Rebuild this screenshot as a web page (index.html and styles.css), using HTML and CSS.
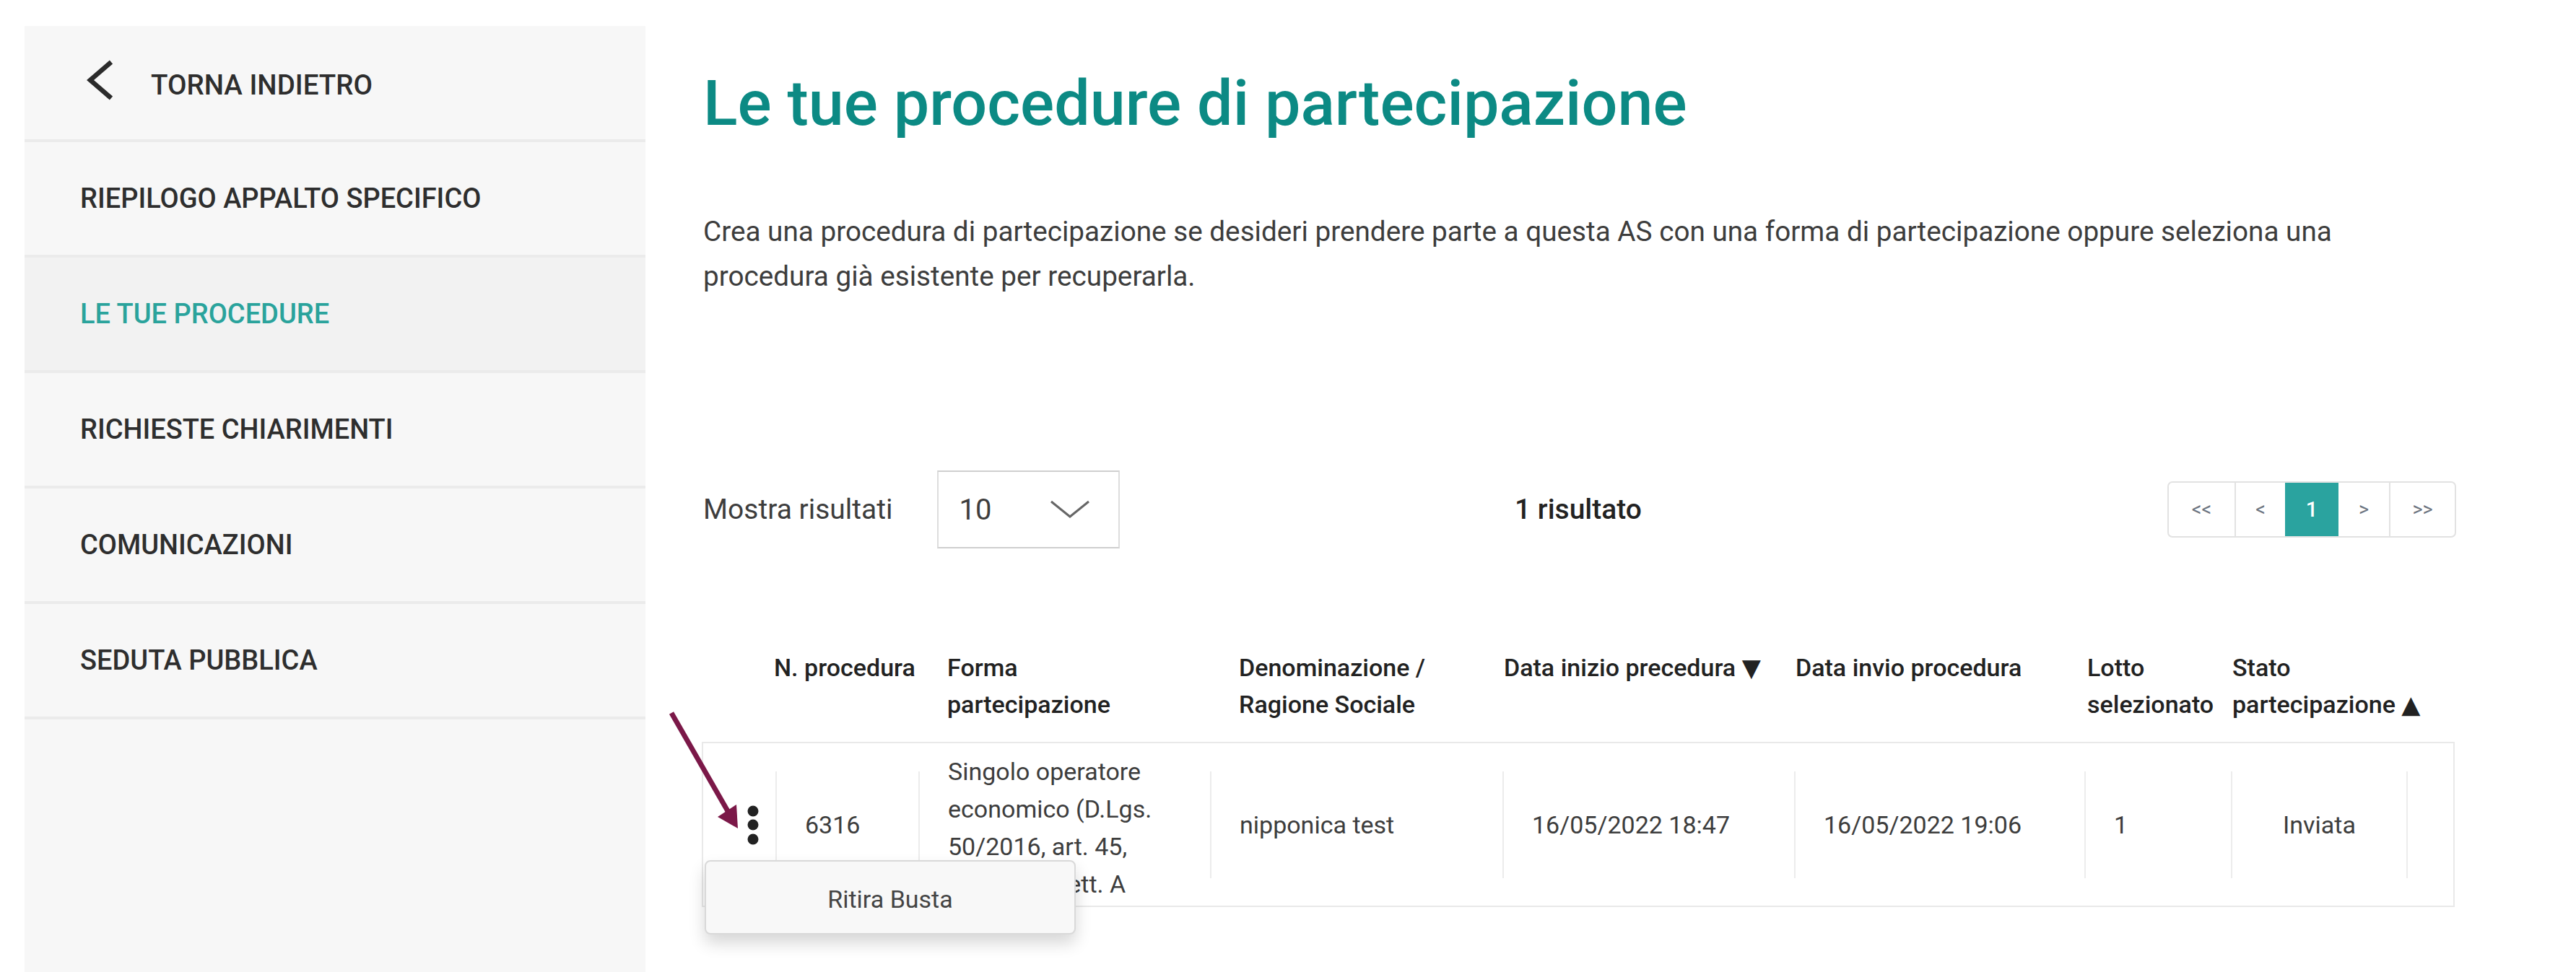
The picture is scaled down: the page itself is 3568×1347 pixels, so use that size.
FILE: index.html
```html
<!DOCTYPE html>
<html lang="it">
<head>
<meta charset="utf-8">
<title>Le tue procedure di partecipazione</title>
<link rel="stylesheet" href="styles.css">
</head>
<body>
<div class="page">
  <aside class="sidebar">
    <a class="nav-item nav-back" href="#">
      <svg class="chev" width="40" height="56" viewBox="0 0 40 56"><polyline points="36,3 7,28 36,53" fill="none" stroke="#2b2b2b" stroke-width="6.5"/></svg>
      <span>TORNA INDIETRO</span>
    </a>
    <a class="nav-item" href="#">RIEPILOGO APPALTO SPECIFICO</a>
    <a class="nav-item active" href="#">LE TUE PROCEDURE</a>
    <a class="nav-item" href="#">RICHIESTE CHIARIMENTI</a>
    <a class="nav-item" href="#">COMUNICAZIONI</a>
    <a class="nav-item" href="#">SEDUTA PUBBLICA</a>
  </aside>

  <main class="main">
    <h1 class="title">Le tue procedure di partecipazione</h1>
    <p class="intro">Crea una procedura di partecipazione se desideri prendere parte a questa AS con una forma di partecipazione oppure seleziona una<br>procedura già esistente per recuperarla.</p>

    <div class="controls">
      <div class="show">
        <span class="show-label">Mostra risultati</span>
        <div class="select">
          <span class="select-value">10</span>
          <svg width="56" height="26" viewBox="0 0 56 26"><polyline points="2,2 28,23 54,2" fill="none" stroke="#666" stroke-width="3"/></svg>
        </div>
      </div>
      <div class="count">1 risultato</div>
      <nav class="pager">
        <span class="pg pg-wide">&lt;&lt;</span>
        <span class="pg">&lt;</span>
        <span class="pg pg-active">1</span>
        <span class="pg">&gt;</span>
        <span class="pg pg-wide">&gt;&gt;</span>
      </nav>
    </div>

    <div class="table">
      <div class="thead">
        <div class="th"></div>
        <div class="th th-tight">N. procedura</div>
        <div class="th th-pad">Forma<br>partecipazione</div>
        <div class="th th-pad">Denominazione /<br>Ragione Sociale</div>
        <div class="th">Data inizio precedura ▼</div>
        <div class="th">Data invio procedura</div>
        <div class="th th-lotto">Lotto<br>selezionato</div>
        <div class="th">Stato<br>partecipazione ▲</div>
        <div class="th"></div>
      </div>

      <div class="row">
        <div class="cell cell-menu">
          <svg width="16" height="56" viewBox="0 0 16 56"><circle cx="8" cy="8" r="7.5" fill="#222"/><circle cx="8" cy="27" r="7.5" fill="#222"/><circle cx="8" cy="47" r="7.5" fill="#222"/></svg>
        </div>
        <div class="cell cell-div">6316</div>
        <div class="cell cell-div cell-multi">Singolo operatore<br>economico (D.Lgs.<br>50/2016, art. 45,<br>comma 2, lett. A</div>
        <div class="cell cell-div">nipponica test</div>
        <div class="cell cell-div">16/05/2022 18:47</div>
        <div class="cell cell-div">16/05/2022 19:06</div>
        <div class="cell cell-div">1</div>
        <div class="cell cell-div cell-center">Inviata</div>
        <div class="cell cell-div"></div>

        <div class="popup">Ritira Busta</div>

        <svg class="arrow" width="110" height="172" viewBox="0 0 110 172">
          <line x1="5" y1="5" x2="83" y2="141" stroke="#7b1848" stroke-width="7"/>
          <polygon points="69,149 95,132 97,165" fill="#7b1848"/>
        </svg>
      </div>
    </div>
  </main>
</div>
</body>
</html>
```

FILE: styles.css
```css
* { box-sizing: border-box; }

html, body {
  margin: 0;
  padding: 0;
  background: #ffffff;
}

body {
  font-family: "Roboto", "DejaVu Sans", "Open Sans", sans-serif;
  color: #333333;
  overflow: hidden;
}

.page {
  display: flex;
  align-items: flex-start;
  min-height: 1347px;
}

/* ---------- sidebar ---------- */
.sidebar {
  width: 860px;
  margin: 36px 0 0 34px;
  min-height: 1311px;
  background: #f7f7f7;
  display: flex;
  flex-direction: column;
}

.nav-item {
  display: flex;
  align-items: center;
  height: 160px;
  padding-left: 77px;
  border-bottom: 4px solid #ebebeb;
  font-size: 38px;
  font-weight: 500;
  color: #2e2e2e;
  text-decoration: none;
}

.nav-back {
  height: 161px;
  padding-left: 84px;
  gap: 51px;
}

.nav-back .chev {
  display: block;
  margin-top: -8px;
}

.nav-back span {
  margin-top: 5px;
  font-size: 38.5px;
}

.nav-item.active {
  background: #f2f2f2;
  color: #2aa39c;
}

/* ---------- main ---------- */
.main {
  width: 2428px;
  margin-left: 78px;
  padding-top: 89px;
}

.title {
  margin: 0 0 0 2px;
  font-size: 88px;
  line-height: 107px;
  font-weight: 500;
  color: #0c8a84;
}

.intro {
  margin: 94px 0 0 2px;
  font-size: 38.7px;
  line-height: 62px;
  color: #3d3d3d;
  white-space: nowrap;
}

/* ---------- controls ---------- */
.controls {
  margin-top: 238px;
  height: 108px;
  display: grid;
  grid-template-columns: 1fr auto 1fr;
  align-items: center;
}

.show {
  display: flex;
  align-items: center;
  gap: 61px;
  padding-left: 2px;
}

.show-label {
  font-size: 39px;
  color: #3d3d3d;
}

.select {
  width: 253px;
  height: 108px;
  border: 2px solid #dddddd;
  border-top-color: #cfcfcf;
  border-bottom-color: #cfcfcf;
  background: #fff;
  display: flex;
  align-items: center;
  justify-content: space-between;
  padding: 0 39px 0 29px;
}

.select-value {
  font-size: 40px;
  color: #3d3d3d;
}

.select svg { display: block; }

.count {
  font-size: 39px;
  font-weight: 500;
  color: #222;
}

.pager {
  justify-self: end;
  margin-right: -2px;
  display: flex;
  height: 78px;
  border: 2px solid #e2e2e2;
  border-radius: 7px;
  overflow: hidden;
  background: #fff;
}

.pg {
  width: 70px;
  display: flex;
  align-items: center;
  justify-content: center;
  font-size: 27px;
  color: #6c7480;
  border-left: 2px solid #e2e2e2;
}

.pg:first-child { border-left: none; }

.pg-wide { width: 91px; }

.pg-active {
  width: 74px;
  background: #2aa39f;
  color: #ffffff;
  font-weight: 500;
  font-size: 29px;
  border-left: none;
}

.pg-active + .pg { border-left: none; }

/* ---------- table ---------- */
.table {
  margin-top: 140px;
}

.thead,
.row {
  display: grid;
  grid-template-columns: 100px 198px 404px 405px 404px 402px 203px 243px 1fr;
}

.thead {
  padding: 0 2px;
  align-items: start;
}

.th {
  font-size: 34px;
  line-height: 51px;
  font-weight: 500;
  color: #222;
  white-space: nowrap;
  padding-left: 2px;
}

.th-tight { padding-left: 0; margin-left: -2px; }
.th-pad { padding-left: 40px; }
.th-lotto { padding-left: 4px; }

.row {
  position: relative;
  margin-top: 26px;
  border: 2px solid #e9e9e9;
  padding: 39px 0 38px;
  background: #fff;
}

.cell {
  height: 148px;
  display: flex;
  align-items: center;
  font-size: 34px;
  line-height: 52px;
  color: #3d3d3d;
  white-space: nowrap;
}

.cell-div {
  border-left: 2px solid #ececec;
  padding-left: 39px;
}

.cell-multi {
  padding-top: 8px;
}

.cell-center {
  justify-content: center;
  padding-left: 0;
}

.cell-menu {
  justify-content: flex-end;
  padding-right: 23px;
  padding-top: 2px;
}

.cell-menu svg { display: block; }

.popup {
  position: absolute;
  left: 2px;
  top: 162px;
  width: 514px;
  height: 103px;
  background: #f8f8f8;
  border: 2px solid #d9d9d9;
  border-radius: 8px;
  box-shadow: 0 12px 22px rgba(0, 0, 0, 0.16);
  display: flex;
  align-items: center;
  justify-content: center;
  font-size: 34px;
  color: #444;
  padding-top: 4px;
}

.arrow {
  position: absolute;
  left: -49px;
  top: -47px;
  display: block;
}
```
